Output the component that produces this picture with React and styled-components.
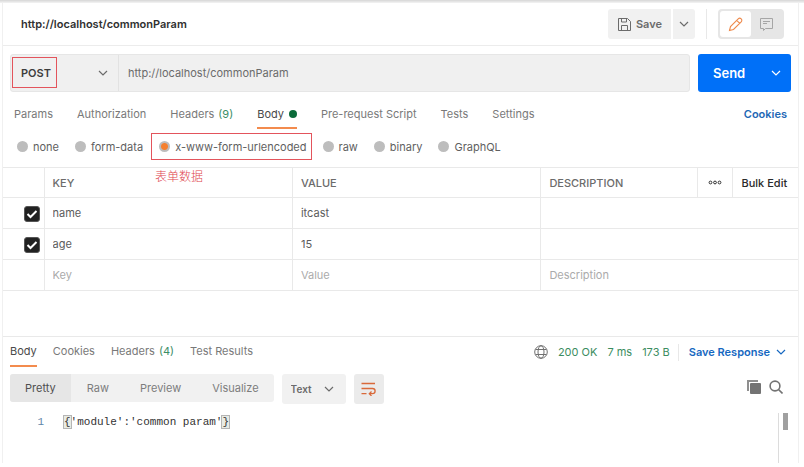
import React, { useState } from 'react';
import styled, { createGlobalStyle } from 'styled-components';

const GlobalStyle = createGlobalStyle`
  * {
    box-sizing: border-box;
  }

  body {
    margin: 0;
    background: #fff;
    color: #6b6b6b;
    font-family: Inter, "Noto Sans CJK SC", sans-serif;
    font-size: 11px;
    line-height: 16px;
  }

  button, input, select {
    margin: 0;
    padding: 0;
    border: 0;
    background: none;
    color: inherit;
    font: inherit;
  }

  button, select {
    cursor: pointer;
  }
`

const Page = styled.div`
  display: flex;
  flex-direction: column;
  min-height: 100vh;
  padding: 0 5px 4px 2px;
`

const TopEdge = styled.div`
  height: 3px;
  margin: 0 -5px 0 -2px;
  background: linear-gradient(#d6d6d6, #f4f4f4);
`

const Frame = styled.main`
  display: flex;
  flex-direction: column;
  flex: 1;
  border: solid #f0f0f0;
  border-width: 0 1px;
`

const Header = styled.header`
  display: flex;
  align-items: center;
  height: 43px;
  padding: 0 14px 0 18px;
  border-bottom: 1px solid #ececec;
`

const Title = styled.h1`
  flex: 1;
  margin: 0;
  color: #303030;
  font-size: 11px;
  font-weight: 600;
`

const SaveGroup = styled.div`
  display: flex;
  gap: 2px;
`

const SaveButton = styled.button`
  display: flex;
  align-items: center;
  justify-content: center;
  gap: 4px;
  width: ${props => props.$small ? '22px' : '63px'};
  height: 30px;
  border-radius: ${props => props.$small ? '0 3px 3px 0' : '3px 0 0 3px'};
  background: #f1f1f1;
  font-weight: 600;
`

const Separator = styled.span`
  width: 1px;
  height: ${props => props.$tall ? '30px' : '17px'};
  margin: ${props => props.$tall ? '0 11px' : '0 0 0 -2px'};
  background: #e8e8e8;
`

const ViewSwitch = styled.div`
  display: flex;
  height: 30px;
  padding: 2px;
  border-radius: 4px;
  background: #e6e6e6;
`

const ViewButton = styled.button`
  display: flex;
  align-items: center;
  justify-content: center;
  width: 31px;
  border-radius: 3px;
  background: ${props => props.$active ? '#fff' : 'transparent'};
  color: ${props => props.$active ? '#ee8a4c' : '#a6a6a6'};
`

const RequestLine = styled.div`
  display: flex;
  gap: 8px;
  padding: 8px 7px 0;
`

const UrlBox = styled.div`
  display: flex;
  flex: 1;
  height: 38px;
  border: 1px solid #e6e6e6;
  border-radius: 3px;
  background: #f0f0f0;
`

const MethodBox = styled.div`
  position: relative;
  display: flex;
  align-items: center;
  width: 108px;
  padding-right: 10px;
  border-right: 1px solid #e2e2e2;
`

const MethodSelect = styled.select`
  appearance: none;
  flex: 1;
  height: 36px;
  padding-left: 10px;
  outline: 0;
  color: #3d3d3d;
  font-weight: 600;
`

const MethodMark = styled.span`
  position: absolute;
  top: 2px;
  left: 1px;
  width: 45px;
  height: 31px;
  border: 1px solid #e3545c;
  pointer-events: none;
`

const UrlInput = styled.input`
  flex: 1;
  min-width: 0;
  padding: 0 9px;
  outline: 0;
`

const SendButton = styled.button`
  display: flex;
  align-items: center;
  justify-content: space-between;
  width: 93px;
  padding: 0 10px 0 15px;
  border-radius: 3px;
  background: #0070f8;
  color: #fff;
  font-size: 13px;
  font-weight: 600;
`

const Tabs = styled.nav`
  display: flex;
  gap: ${props => props.$gap};
  min-width: 0;
`

const Tab = styled.button`
  display: flex;
  align-items: center;
  gap: 4px;
  height: ${props => props.$height};
  border-bottom: 2px solid ${props => props.$active ? '#f38b4d' : 'transparent'};
  color: ${props => props.$active ? '#4a4a4a' : '#797979'};
  white-space: nowrap;
`

const Count = styled.span`
  color: #3b8d66;
`

const Dot = styled.span`
  width: 8px;
  height: 8px;
  margin-left: 1px;
  border-radius: 50%;
  background: #0b6b3a;
`

const RequestTabs = styled.div`
  display: flex;
  align-items: center;
  justify-content: space-between;
  padding: 8px 11px 0;
`

const TextLink = styled.a`
  padding-bottom: 2px;
  color: #1f68b5;
  font-weight: 600;
  text-decoration: none;
`

const BodyTypes = styled.div`
  position: relative;
  display: flex;
  align-items: center;
  height: 38px;
  padding: 0 0 3px 14px;
`

const BodyType = styled.label`
  display: flex;
  align-items: center;
  gap: 5px;
  height: 27px;
  margin-right: ${props => props.$marked ? '11px' : '16px'};
  margin-left: ${props => props.$marked ? '-8px' : '0'};
  padding: ${props => props.$marked ? '0 4px 0 7px' : '0'};
  border: solid #e3545c;
  border-width: ${props => props.$marked ? '1px' : '0'};
  color: #5f5f5f;
  white-space: nowrap;
`

const Radio = styled.input`
  appearance: none;
  width: 11px;
  height: 11px;
  border-radius: 50%;
  background: #bdbdbd;

  &:checked {
    background: radial-gradient(circle, #f5802f 3px, #bdbdbd 4px);
  }
`

const Note = styled.span`
  position: absolute;
  top: 40px;
  left: 152px;
  z-index: 1;
  color: #e0444d;
  font-family: "Liberation Serif", "Noto Sans CJK SC", serif;
  font-size: 12px;
  font-weight: 300;
`

const ParamTable = styled.table`
  width: 100%;
  table-layout: fixed;
  border-collapse: collapse;
  border-bottom: 1px solid #e9e9e9;

  th, td {
    height: 31px;
    padding: 0 0 0 8px;
    border-top: 1px solid #e9e9e9;
    border-left: 1px solid #e9e9e9;
    text-align: left;
  }

  th {
    height: 30px;
    font-weight: 500;
  }

  th:first-child, td:first-child {
    padding: 0 4px 0 0;
    border-left: 0;
    text-align: right;
  }
`

const Col = styled.col`
  width: ${props => props.$width};
`

const CellInput = styled.input`
  display: block;
  width: 100%;
  height: 28px;
  padding-bottom: 1px;
  outline: 0;
  color: #5c5c5c;

  &::placeholder {
    color: #ababab;
    opacity: 1;
  }
`

const CheckBox = styled.input`
  appearance: none;
  display: inline-block;
  width: 16px;
  height: 16px;
  border: 1px solid #8a8a8a;
  border-radius: 3px;
  vertical-align: middle;

  &:checked {
    border-color: #555;
    background: #212121 url("data:image/svg+xml,%3Csvg xmlns='http://www.w3.org/2000/svg' viewBox='0 0 14 14'%3E%3Cpath d='M2.5 7l3 3 6-6' fill='none' stroke='white' stroke-width='2'/%3E%3C/svg%3E") center / 14px no-repeat;
  }
`

const MoreButton = styled.button`
  display: flex;
  align-items: center;
  padding-left: 2px;
  color: #303030;
`

const BulkEdit = styled.button`
  padding-left: 1px;
  color: #2a2a2a;
  font-weight: 500;
  white-space: nowrap;
`

const Response = styled.section`
  display: flex;
  flex-direction: column;
  flex: 1;
  margin-top: 45px;
  border-top: 1px solid #e9e9e9;
`

const ResponseHead = styled.div`
  display: flex;
  align-items: center;
  justify-content: space-between;
  padding: 0 12px 0 7px;
`

const Status = styled.div`
  display: flex;
  align-items: center;
  gap: 10px;
  color: #3b8d5f;
  white-space: nowrap;
`

const SaveResponse = styled.button`
  display: flex;
  align-items: center;
  gap: 6px;
  color: #1668c1;
  font-weight: 600;
`

const Toolbar = styled.div`
  display: flex;
  align-items: flex-start;
  gap: 8px;
  padding: 7px 15px 0 7px;
`

const Formats = styled.div`
  display: flex;
  gap: 1px;
  height: 28px;
  border-radius: 3px;
  background: #f1f1f1;
  overflow: hidden;
`

const Format = styled.button`
  padding: 0 15px;
  background: ${props => props.$active ? '#e6e6e6' : 'transparent'};
  color: ${props => props.$active ? '#4f4f4f' : '#7d7d7d'};
`

const LanguageBox = styled.div`
  display: flex;
  align-items: center;
  width: 64px;
  height: 30px;
  padding-right: 12px;
  border-radius: 3px;
  background: #f1f1f1;
`

const LanguageSelect = styled.select`
  appearance: none;
  flex: 1;
  min-width: 0;
  height: 30px;
  padding-left: 9px;
  outline: 0;
  font-weight: 600;
  font-size: 10px;
`

const WrapButton = styled.button`
  display: flex;
  align-items: center;
  justify-content: center;
  width: 30px;
  height: 30px;
  border-radius: 3px;
  background: #ebebeb;
  color: #d9693a;
`

const ToolIcons = styled.div`
  display: flex;
  gap: 8px;
  margin: 6px 0 0 auto;
  color: #737373;

  button {
    display: flex;
  }
`

const Code = styled.div`
  display: flex;
  flex: 1;
  margin-top: 9px;
  padding-right: 9px;
  font-family: "Liberation Mono", monospace;
`

const LineNumber = styled.span`
  width: 41px;
  padding-top: 1px;
  color: #5f86a8;
  text-align: right;
`

const Line = styled.code`
  flex: 1;
  padding: 1px 0 0 20px;
  color: #333;
  font-family: inherit;
  font-size: 11px;
`

const Bracket = styled.span`
  outline: 1px solid #b5b5b5;
  background: #e8ebe4;
`

const ScrollTrack = styled.div`
  width: 11px;
  padding-left: 4px;
  border-left: 1px solid #dcdcdc;
`

const ScrollThumb = styled.div`
  width: 5px;
  height: 17px;
  background: #a0a0a0;
`

const Chevron = () => (
  <svg width="10" height="10" viewBox="0 0 10 10" fill="none" stroke="currentColor" strokeWidth="1.2">
    <path d="M1 3l4 4 4-4" />
  </svg>
)

const SaveIcon = () => (
  <svg width="15" height="15" viewBox="0 0 15 15" fill="none" stroke="currentColor">
    <path d="M1.5 1.5h9l3 3v9h-12zM4.5 1.5v3.5h5v-3.5M4.5 13.5v-5h6v5" />
  </svg>
)

const PencilIcon = () => (
  <svg width="15" height="15" viewBox="0 0 15 15" fill="none" stroke="currentColor" strokeWidth="1.1">
    <path d="M1.5 13.5l1-4 7.7-7.7a2.1 2.1 0 0 1 3 3l-7.7 7.7zM8.7 3.3l3 3" />
  </svg>
)

const CommentIcon = () => (
  <svg width="15" height="14" viewBox="0 0 15 14" fill="none" stroke="currentColor">
    <path d="M1.5 1.5h12v10h-7l-2 2v-2h-3zM4 4.5h7M4 6.5h4" />
  </svg>
)

const MoreIcon = () => (
  <svg width="14" height="5" viewBox="0 0 14 5" fill="none" stroke="currentColor">
    <circle cx="2.5" cy="2.5" r="1.4" />
    <circle cx="7" cy="2.5" r="1.4" />
    <circle cx="11.5" cy="2.5" r="1.4" />
  </svg>
)

const GlobeIcon = () => (
  <svg width="14" height="14" viewBox="0 0 14 14" fill="none" stroke="#707070">
    <circle cx="7" cy="7" r="6.3" />
    <ellipse cx="7" cy="7" rx="3" ry="6.3" />
    <path d="M1.5 4.5h11M1.5 9.5h11" />
  </svg>
)

const WrapIcon = () => (
  <svg width="15" height="14" viewBox="0 0 15 14" fill="none" stroke="currentColor" strokeWidth="1.3">
    <path d="M.5 1.5h13.5M.5 6.5h11a2.6 2.6 0 0 1 0 5.2H8.5M.5 11.7h5M10.5 9.5L8.3 11.7l2.2 2.2" />
  </svg>
)

const CopyIcon = () => (
  <svg width="14" height="14" viewBox="0 0 14 14" fill="currentColor">
    <path d="M0 0h11v2H2v9H0z" opacity=".8" />
    <rect x="3" y="3" width="11" height="11" rx="1" />
  </svg>
)

const SearchIcon = () => (
  <svg width="14" height="14" viewBox="0 0 14 14" fill="none" stroke="currentColor" strokeWidth="1.6">
    <circle cx="6" cy="6" r="4.9" />
    <path d="M9.5 9.5l4 4" />
  </svg>
)

const requestTabs = [
  { name: 'Params' },
  { name: 'Authorization' },
  { name: 'Headers', count: 9 },
  { name: 'Body', dot: true },
  { name: 'Pre-request Script' },
  { name: 'Tests' },
  { name: 'Settings' },
]

const responseTabs = [
  { name: 'Body' },
  { name: 'Cookies' },
  { name: 'Headers', count: 4 },
  { name: 'Test Results' },
]

const bodyTypes = ['none', 'form-data', 'x-www-form-urlencoded', 'raw', 'binary', 'GraphQL']
const formats = ['Pretty', 'Raw', 'Preview', 'Visualize']
const params = [
  { key: 'name', value: 'itcast' },
  { key: 'age', value: '15' },
]

function TabList({ tabs, gap, height }) {
  const [active, setActive] = useState('Body');

  return (
    <Tabs $gap={gap}>
      {tabs.map(tab =>
        <Tab key={tab.name} $height={height} $active={tab.name === active} onClick={() => setActive(tab.name)}>
          {tab.name}
          {tab.count && <Count>({tab.count})</Count>}
          {tab.dot && <Dot />}
        </Tab>
      )}
    </Tabs>
  )
}

function Params() {
  return (
    <ParamTable>
      <colgroup>
        <Col $width="41px" />
        <Col $width="31.25%" />
        <Col $width="31.25%" />
        <Col $width="auto" />
        <Col $width="35px" />
        <Col $width="66px" />
      </colgroup>
      <thead>
        <tr>
          <th></th>
          <th>KEY</th>
          <th>VALUE</th>
          <th>DESCRIPTION</th>
          <th><MoreButton aria-label="Columns"><MoreIcon /></MoreButton></th>
          <th><BulkEdit>Bulk Edit</BulkEdit></th>
        </tr>
      </thead>
      <tbody>
        {params.map(param =>
          <tr key={param.key}>
            <td><CheckBox type="checkbox" defaultChecked aria-label={param.key} /></td>
            <td><CellInput aria-label="Key" defaultValue={param.key} /></td>
            <td><CellInput aria-label="Value" defaultValue={param.value} /></td>
            <td colSpan={3}><CellInput aria-label="Description" /></td>
          </tr>
        )}
        <tr>
          <td></td>
          <td><CellInput aria-label="Key" placeholder="Key" /></td>
          <td><CellInput aria-label="Value" placeholder="Value" /></td>
          <td colSpan={3}><CellInput aria-label="Description" placeholder="Description" /></td>
        </tr>
      </tbody>
    </ParamTable>
  )
}

function App() {
  const [bodyType, setBodyType] = useState('x-www-form-urlencoded');
  const [format, setFormat] = useState('Pretty');

  return (
    <Page>
      <GlobalStyle />
      <TopEdge />
      <Frame>
        <Header>
          <Title>http://localhost/commonParam</Title>
          <SaveGroup>
            <SaveButton><SaveIcon />Save</SaveButton>
            <SaveButton $small aria-label="Save options"><Chevron /></SaveButton>
          </SaveGroup>
          <Separator $tall />
          <ViewSwitch>
            <ViewButton $active aria-label="Edit"><PencilIcon /></ViewButton>
            <ViewButton aria-label="Comments"><CommentIcon /></ViewButton>
          </ViewSwitch>
        </Header>

        <RequestLine>
          <UrlBox>
            <MethodBox>
              <MethodSelect aria-label="Method" defaultValue="POST">
                <option>GET</option>
                <option>POST</option>
              </MethodSelect>
              <Chevron />
              <MethodMark />
            </MethodBox>
            <UrlInput aria-label="Request URL" defaultValue="http://localhost/commonParam" />
          </UrlBox>
          <SendButton>Send<Chevron /></SendButton>
        </RequestLine>

        <RequestTabs>
          <TabList tabs={requestTabs} gap="24px" height="29px" />
          <TextLink href="#">Cookies</TextLink>
        </RequestTabs>

        <BodyTypes>
          {bodyTypes.map(type =>
            <BodyType key={type} $marked={type === 'x-www-form-urlencoded'}>
              <Radio type="radio" name="body-type" checked={type === bodyType} onChange={() => setBodyType(type)} />
              {type}
            </BodyType>
          )}
          <Note>表单数据</Note>
        </BodyTypes>

        <Params />

        <Response>
          <ResponseHead>
            <TabList tabs={responseTabs} gap="16px" height="30px" />
            <Status>
              <GlobeIcon />
              <span>200 OK</span>
              <span>7 ms</span>
              <span>173 B</span>
              <Separator />
              <SaveResponse>Save Response<Chevron /></SaveResponse>
            </Status>
          </ResponseHead>

          <Toolbar>
            <Formats>
              {formats.map(name =>
                <Format key={name} $active={name === format} onClick={() => setFormat(name)}>{name}</Format>
              )}
            </Formats>
            <LanguageBox>
              <LanguageSelect aria-label="Language" defaultValue="Text">
                <option>Text</option>
                <option>JSON</option>
              </LanguageSelect>
              <Chevron />
            </LanguageBox>
            <WrapButton aria-label="Wrap lines"><WrapIcon /></WrapButton>
            <ToolIcons>
              <button aria-label="Copy"><CopyIcon /></button>
              <button aria-label="Search"><SearchIcon /></button>
            </ToolIcons>
          </Toolbar>

          <Code>
            <LineNumber>1</LineNumber>
            <Line><Bracket>{'{'}</Bracket>'module':'common param'<Bracket>{'}'}</Bracket></Line>
            <ScrollTrack><ScrollThumb /></ScrollTrack>
          </Code>
        </Response>
      </Frame>
    </Page>
  )
}

export default App;
